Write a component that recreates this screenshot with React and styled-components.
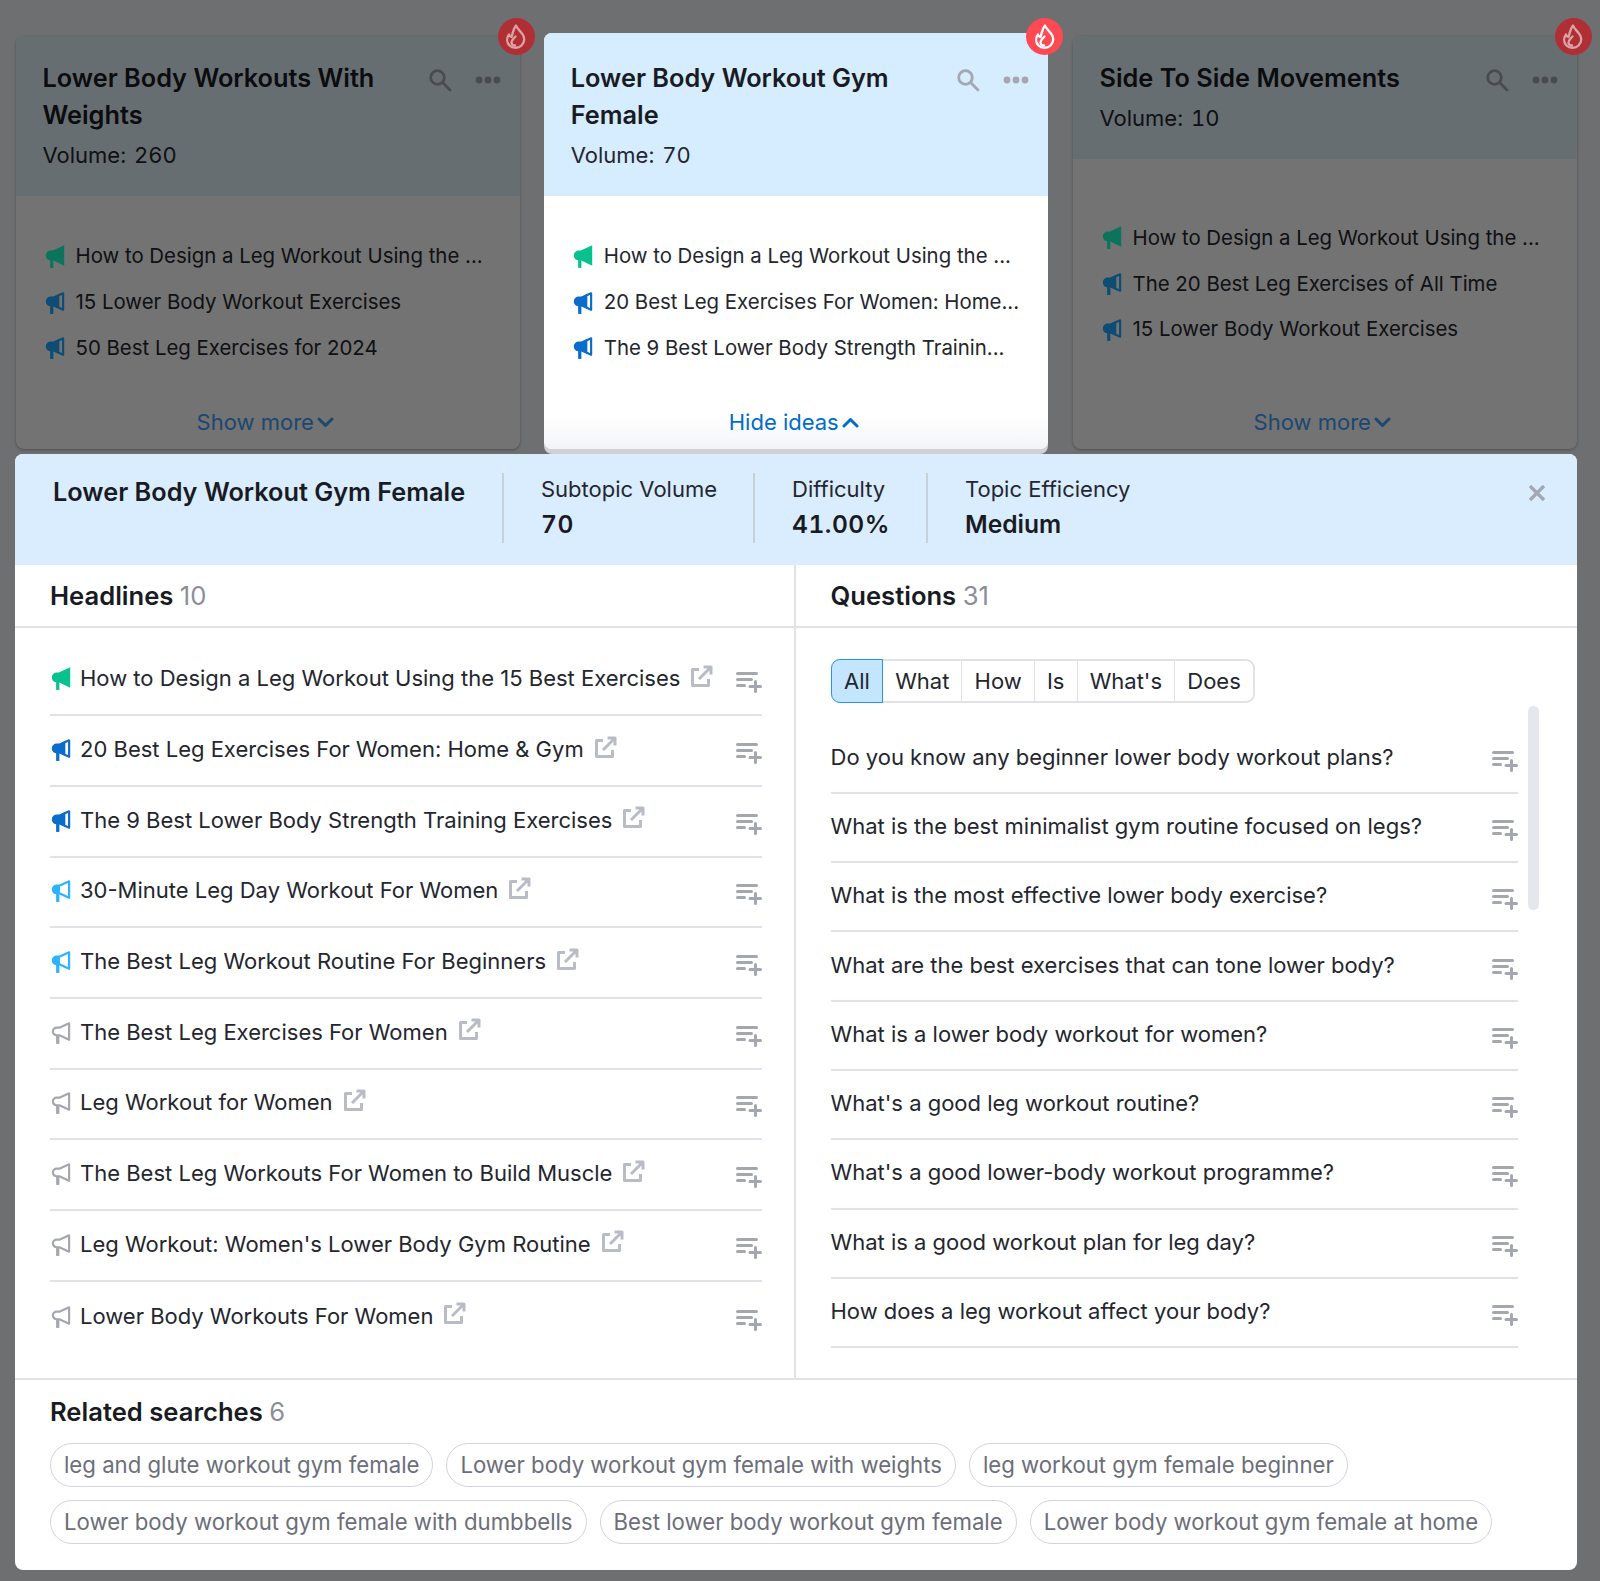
import React from "react";
import styled, { createGlobalStyle } from "styled-components";

const Global = createGlobalStyle`
  html, body { margin: 0; padding: 0; }
  body { font-family: Inter, "Noto Sans", "Liberation Sans", sans-serif; background: #f4f5f9; color: #191b23; }
  * { box-sizing: border-box; }
`;

const Page = styled.div`
  position: relative;
  width: 1600px;
  height: 1581px;
  padding: 33px 23px 0 15px;
  overflow: hidden;
`;
const Dim = styled.div`
  position: absolute;
  inset: 0;
  background: rgba(0, 0, 0, 0.55);
  z-index: 1;
`;
const CardRow = styled.div`
  display: grid;
  grid-template-columns: 503.5px 504px 503.5px;
  column-gap: 24.75px;
  height: 416px;
  width: 1562px;
  padding-left: 1px;
`;
const Card = styled.section`
  position: relative;
  display: flex;
  flex-direction: column;
  background: #fff;
  border-radius: 8px;
  margin-top: ${(p) => (p.$active ? "0" : "3px")};
  z-index: ${(p) => (p.$active ? 2 : "auto")};
  box-shadow: ${(p) => (p.$active ? "0 5px 0 #cfd1d4" : "0 1px 3px rgba(0,0,0,.3)")};
`;
const CardHead = styled.header`
  position: relative;
  flex: none;
  background: ${(p) => (p.$active ? "#d6ecff" : "#e5f4fb")};
  border-radius: 8px 8px 0 0;
  padding: ${(p) => (p.$active ? "26px" : "23px")} 27px 22px 26.5px;
`;
const CardTitle = styled.h3`
  margin: 0;
  width: 345px;
  font-size: 25.3px;
  font-weight: 600;
  line-height: 37px;
  color: #191b23;
`;
const Volume = styled.div`
  margin-top: 4px;
  font-size: 22px;
  line-height: 37px;
  color: #24262e;
  word-spacing: 2px;
  font-variant-numeric: tabular-nums;
`;
const CardTools = styled.div`
  position: absolute;
  top: ${(p) => (p.$active ? "35px" : "32px")};
  right: 19px;
  display: flex;
  align-items: center;
  gap: 23px;
  color: #a4a6b0;
`;
const Flame = styled.div`
  position: absolute;
  top: ${(p) => (p.$active ? "-15px" : "-18px")};
  right: -15px;
  width: 37px;
  height: 37px;
  border-radius: 50%;
  background: ${(p) => (p.$active ? "#ff4953" : "#b02f35")};
  color: ${(p) => (p.$active ? "#fff" : "#dba3a5")};
  z-index: 2;
  display: flex;
  align-items: center;
  justify-content: center;
`;
const IdeaList = styled.ul`
  list-style: none;
  margin: 0;
  padding: 0 0 1px 28px;
  flex: 1;
  display: flex;
  flex-direction: column;
  justify-content: center;
`;
const Idea = styled.li`
  display: flex;
  align-items: center;
  gap: 9.5px;
  height: 45.6px;
  font-size: 20.4px;
  color: #24262e;
  white-space: nowrap;
`;
const CardFoot = styled.div`
  flex: none;
  height: 41px;
  padding-right: 5px;
  display: flex;
  align-items: flex-start;
  justify-content: center;
  font-size: 22px;
  line-height: 29px;
  color: ${(p) => (p.$active ? "#006dca" : "#3f9df5")};
  border-radius: 0 0 8px 8px;
  background: ${(p) => (p.$active ? "linear-gradient(#fff 20%, #f3f4f7)" : "transparent")};
`;
const FootLabel = styled.span`
  display: inline-flex;
  align-items: center;
  gap: 3px;
`;

const Modal = styled.main`
  position: relative;
  z-index: 3;
  margin-top: 5px;
  width: 1562px;
  height: 1116px;
  background: #fff;
  border-radius: 8px;
  display: flex;
  flex-direction: column;
`;
const ModalHead = styled.header`
  position: relative;
  flex: none;
  height: 111px;
  background: #d9edff;
  border-radius: 8px 8px 0 0;
  display: flex;
  padding-top: 19px;
  padding-left: 38px;
`;
const ModalTitle = styled.h2`
  margin: 0;
  width: 449px;
  font-size: 25.3px;
  line-height: 38px;
  font-weight: 600;
`;
const Stat = styled.div`
  height: 70px;
  border-left: 2px solid #c8d0d8;
  padding: 0 36px 0 37px;
  display: flex;
  flex-direction: column;
`;
const StatLabel = styled.div`
  font-size: 22px;
  line-height: 32px;
  color: #24262e;
`;
const StatValue = styled.div`
  margin-top: 0.5px;
  font-size: 24.6px;
  line-height: 36px;
  font-weight: 600;
  font-variant-numeric: tabular-nums;
  letter-spacing: ${(p) => (p.$numeric ? "0.5px" : "0")};
`;
const Close = styled.button`
  position: absolute;
  top: 30px;
  right: 31px;
  padding: 0;
  border: 0;
  background: none;
  color: #a3a7b2;
  display: flex;
`;
const Columns = styled.div`
  flex: none;
  height: 815px;
  display: grid;
  grid-template-columns: 779px 1fr;
  border-bottom: 2px solid #e0e1e9;
`;
const Panel = styled.div`
  position: relative;
  display: flex;
  flex-direction: column;
  border-left: ${(p) => (p.$right ? "2px solid #e0e1e9" : "0")};
`;
const PanelHead = styled.div`
  height: 63px;
  flex: none;
  padding-left: ${(p) => (p.$right ? "34.5px" : "35px")};
  border-bottom: 2px solid #e0e1e9;
  display: flex;
  align-items: center;
`;
const SectionTitle = styled.h4`
  margin: 0;
  font-size: 25.6px;
  line-height: 34px;
  font-weight: 600;
`;
const Count = styled.span`
  font-weight: 400;
  color: #8b8e99;
`;
const HeadlineList = styled.ul`
  list-style: none;
  margin: 0;
  padding: 17.5px 32px 0 35px;
`;
const HeadlineRow = styled.li`
  height: 70.7px;
  padding-bottom: 3px;
  display: flex;
  align-items: center;
  border-bottom: ${(p) => (p.$last ? "0" : "2px solid #e0e1e9")};
`;
const HeadlineText = styled.span`
  margin-left: 8px;
  font-size: 22px;
  color: #24262e;
  white-space: nowrap;
`;
const OutIcon = styled.span`
  margin-left: 10px;
  display: flex;
  color: #b9bcc6;
  transform: translateY(-2px);
`;
const AddIcon = styled.span`
  margin-left: auto;
  display: flex;
  color: #a4a6b0;
  transform: translateY(4px);
`;
const Segments = styled.div`
  flex: none;
  align-self: flex-start;
  margin: 31px 0 0 35px;
  height: 44px;
  display: flex;
  border: 2px solid #e0e1e9;
  border-radius: 9px;
`;
const Segment = styled.div`
  display: flex;
  align-items: center;
  padding: 0 12.1px;
  font-size: 22px;
  color: #24262e;
  margin: -2px 0;
  border-left: ${(p) => (p.$first ? "0" : "1px solid #e0e1e9")};
  ${(p) =>
    p.$active &&
    `background: #c4e5fe; border: 1px solid #2b94e1; border-radius: 9px 0 0 9px; margin: -2px 0 -2px -2px;`}
`;
const QuestionList = styled.ul`
  list-style: none;
  margin: 21.5px 0 0 0;
  padding: 0 59px 0 34.5px;
`;
const QuestionRow = styled.li`
  height: 69.3px;
  padding-bottom: 3px;
  display: flex;
  align-items: center;
  border-bottom: 2px solid #e0e1e9;
  font-size: 22px;
  color: #24262e;
`;
const Scrollbar = styled.div`
  position: absolute;
  top: 141px;
  right: 38.5px;
  width: 11px;
  height: 204px;
  border-radius: 6px;
  background: #e6e7ec;
`;
const Related = styled.div`
  padding: 15px 34px 0 35px;
`;
const Chips = styled.div`
  display: flex;
  flex-wrap: wrap;
  gap: 12.5px 13px;
  margin-top: 14px;
`;
const Chip = styled.div`
  height: 44px;
  display: flex;
  align-items: center;
  padding: 0 13px;
  border: 1.5px solid #d1d4db;
  border-radius: 22px;
  font-size: 22.18px;
  color: #6c6e79;
  white-space: nowrap;
`;

const Megaphone = ({ level = 0, color }) => (
  <svg width="22" height="26" viewBox="0 0 20 24" style={{ flex: "none" }} aria-hidden="true">
    {level === 3 ? (
      <path d="M6 7h2l10.500-5v19L8 16H6a4.500 4.500 0 0 1 0-9z" fill={color} />
    ) : (
      <>
        <path d="M6 8h2.500L17.500 4v15.200L8.500 15H6a3.500 3.500 0 0 1 0-7z" fill={level === 0 ? "none" : "#fff"} stroke={color} strokeWidth="2" strokeLinejoin="round" />
        {level >= 1 && <path d="M6 7.500h3v8H6a4 4 0 0 1 0-8z" fill={color} />}
        {level >= 2 && <path d="M8 7.500 14 4.400v14L8 15.500z" fill={color} />}
      </>
    )}
    <path d="M5.500 15h3v8h-3z" fill={color} />
  </svg>
);
const SearchIcon = () => (
  <svg width="24" height="24" viewBox="0 0 24 24" fill="none" stroke="currentColor" strokeWidth="2.800" strokeLinecap="round" aria-hidden="true">
    <circle cx="9.500" cy="9.500" r="6.800" />
    <path d="M14.800 14.800 22 22" />
  </svg>
);
const DotsIcon = () => (
  <svg width="26" height="8" viewBox="0 0 26 8" fill="currentColor" aria-hidden="true">
    <circle cx="4" cy="4" r="3.400" />
    <circle cx="13" cy="4" r="3.400" />
    <circle cx="22" cy="4" r="3.400" />
  </svg>
);
const FlameIcon = () => (
  <svg width="22" height="26" viewBox="0 0 22 26" fill="none" stroke="currentColor" strokeWidth="2.300" strokeLinejoin="round" strokeLinecap="round" aria-hidden="true">
    <path d="M11 1.500C12 5 16 7.500 18 11c2 4 1 8-1.500 10.500-3 3-9 3-12 0-3-3-3-7.500-.5-11 .5 1.500 1.500 2.500 2.500 2.500C8 9 8 5 11 1.500z" />
    <path d="M10.500 12.500C8 15 6.500 16.500 6.500 18.500c0 2 1.700 3 3.500 3" />
  </svg>
);
const Chevron = ({ up }) => (
  <svg width="17" height="11" viewBox="0 0 17 11" fill="none" stroke="currentColor" strokeWidth="3" strokeLinecap="round" strokeLinejoin="round" aria-hidden="true">
    <path d={up ? "M2 9l6.500-6.500L15 9" : "M2 2l6.500 6.500L15 2"} />
  </svg>
);
const ExternalIcon = () => (
  <svg width="23" height="23" viewBox="0 0 23 23" fill="none" stroke="currentColor" strokeWidth="3" strokeLinejoin="round" aria-hidden="true">
    <path d="M9 4.500H2.500v16h16V14" />
    <path d="M9 14 20.500 2.500M13.500 2h7.500v7.500" />
  </svg>
);
const AddListIcon = () => (
  <svg width="26" height="22" viewBox="0 0 26 22" fill="none" stroke="currentColor" strokeWidth="3" strokeLinecap="round" aria-hidden="true">
    <path d="M1.500 2.500h19M1.500 8.500h14M1.500 14.500h7M14 15.500h10.500M19.500 10.500v10" />
  </svg>
);
const CloseIcon = () => (
  <svg width="18" height="18" viewBox="0 0 18 18" fill="none" stroke="currentColor" strokeWidth="3.200" aria-hidden="true">
    <path d="M2 2l14 14M16 2L2 16" />
  </svg>
);

const GREEN = "#07c18f";
const GREEN_DIM = "#1bffcc";
const BLUE = "#0a6dca";
const BLUE_DIM = "#21a9ff";

const cards = [
  {
    title: "Lower Body Workouts With Weights",
    volume: "Volume: 260",
    ideas: [
      ["How to Design a Leg Workout Using the ...", 3, GREEN_DIM],
      ["15 Lower Body Workout Exercises", 2, BLUE_DIM],
      ["50 Best Leg Exercises for 2024", 2, BLUE_DIM],
    ],
  },
  {
    title: "Lower Body Workout Gym Female",
    volume: "Volume: 70",
    active: true,
    ideas: [
      ["How to Design a Leg Workout Using the ...", 3, GREEN],
      ["20 Best Leg Exercises For Women: Home...", 2, BLUE],
      ["The 9 Best Lower Body Strength Trainin...", 2, BLUE],
    ],
  },
  {
    title: "Side To Side Movements",
    volume: "Volume: 10",
    ideas: [
      ["How to Design a Leg Workout Using the ...", 3, GREEN_DIM],
      ["The 20 Best Leg Exercises of All Time", 2, BLUE_DIM],
      ["15 Lower Body Workout Exercises", 2, BLUE_DIM],
    ],
  },
];

const headlines = [
  ["How to Design a Leg Workout Using the 15 Best Exercises", 3, GREEN],
  ["20 Best Leg Exercises For Women: Home & Gym", 2, BLUE],
  ["The 9 Best Lower Body Strength Training Exercises", 2, BLUE],
  ["30-Minute Leg Day Workout For Women", 1, "#2bb3ff"],
  ["The Best Leg Workout Routine For Beginners", 1, "#2bb3ff"],
  ["The Best Leg Exercises For Women", 0, "#a4a6b0"],
  ["Leg Workout for Women", 0, "#a4a6b0"],
  ["The Best Leg Workouts For Women to Build Muscle", 0, "#a4a6b0"],
  ["Leg Workout: Women's Lower Body Gym Routine", 0, "#a4a6b0"],
  ["Lower Body Workouts For Women", 0, "#a4a6b0"],
];

const questions = [
  "Do you know any beginner lower body workout plans?",
  "What is the best minimalist gym routine focused on legs?",
  "What is the most effective lower body exercise?",
  "What are the best exercises that can tone lower body?",
  "What is a lower body workout for women?",
  "What's a good leg workout routine?",
  "What's a good lower-body workout programme?",
  "What is a good workout plan for leg day?",
  "How does a leg workout affect your body?",
];

const related = [
  "leg and glute workout gym female",
  "Lower body workout gym female with weights",
  "leg workout gym female beginner",
  "Lower body workout gym female with dumbbells",
  "Best lower body workout gym female",
  "Lower body workout gym female at home",
];

const segments = ["All", "What", "How", "Is", "What's", "Does"];
const stats = [
  ["Subtopic Volume", "70", true],
  ["Difficulty", "41.00%", true],
  ["Topic Efficiency", "Medium", false],
];

export default function App() {
  return (
    <Page>
      <Global />
      <Dim />
      <CardRow>
        {cards.map((c) => (
          <Card key={c.title} $active={c.active}>
            <CardHead $active={c.active}>
              <CardTitle>{c.title}</CardTitle>
              <Volume>{c.volume}</Volume>
              <CardTools $active={c.active}>
                <SearchIcon />
                <DotsIcon />
              </CardTools>
            </CardHead>
            <Flame $active={c.active}><FlameIcon /></Flame>
            <IdeaList>
              {c.ideas.map(([t, l, col]) => (
                <Idea key={t}>
                  <Megaphone level={l} color={col} />
                  {t}
                </Idea>
              ))}
            </IdeaList>
            <CardFoot $active={c.active}>
              <FootLabel>
                {c.active ? "Hide ideas" : "Show more"}
                <Chevron up={c.active} />
              </FootLabel>
            </CardFoot>
          </Card>
        ))}
      </CardRow>
      <Modal>
        <ModalHead>
          <ModalTitle>Lower Body Workout Gym Female</ModalTitle>
          {stats.map(([l, v, n]) => (
            <Stat key={l}>
              <StatLabel>{l}</StatLabel>
              <StatValue $numeric={n}>{v}</StatValue>
            </Stat>
          ))}
          <Close aria-label="Close"><CloseIcon /></Close>
        </ModalHead>
        <Columns>
          <Panel>
            <PanelHead>
              <SectionTitle>Headlines <Count>10</Count></SectionTitle>
            </PanelHead>
            <HeadlineList>
              {headlines.map(([t, l, col], i) => (
                <HeadlineRow key={t} $last={i === headlines.length - 1}>
                  <Megaphone level={l} color={col} />
                  <HeadlineText>{t}</HeadlineText>
                  <OutIcon><ExternalIcon /></OutIcon>
                  <AddIcon><AddListIcon /></AddIcon>
                </HeadlineRow>
              ))}
            </HeadlineList>
          </Panel>
          <Panel $right>
            <PanelHead $right>
              <SectionTitle>Questions <Count>31</Count></SectionTitle>
            </PanelHead>
            <Segments>
              {segments.map((s, i) => (
                <Segment key={s} $active={i === 0} $first={i <= 1}>{s}</Segment>
              ))}
            </Segments>
            <QuestionList>
              {questions.map((q) => (
                <QuestionRow key={q}>
                  {q}
                  <AddIcon><AddListIcon /></AddIcon>
                </QuestionRow>
              ))}
            </QuestionList>
            <Scrollbar />
          </Panel>
        </Columns>
        <Related>
          <SectionTitle>Related searches <Count>6</Count></SectionTitle>
          <Chips>
            {related.map((r) => (
              <Chip key={r}>{r}</Chip>
            ))}
          </Chips>
        </Related>
      </Modal>
    </Page>
  );
}
